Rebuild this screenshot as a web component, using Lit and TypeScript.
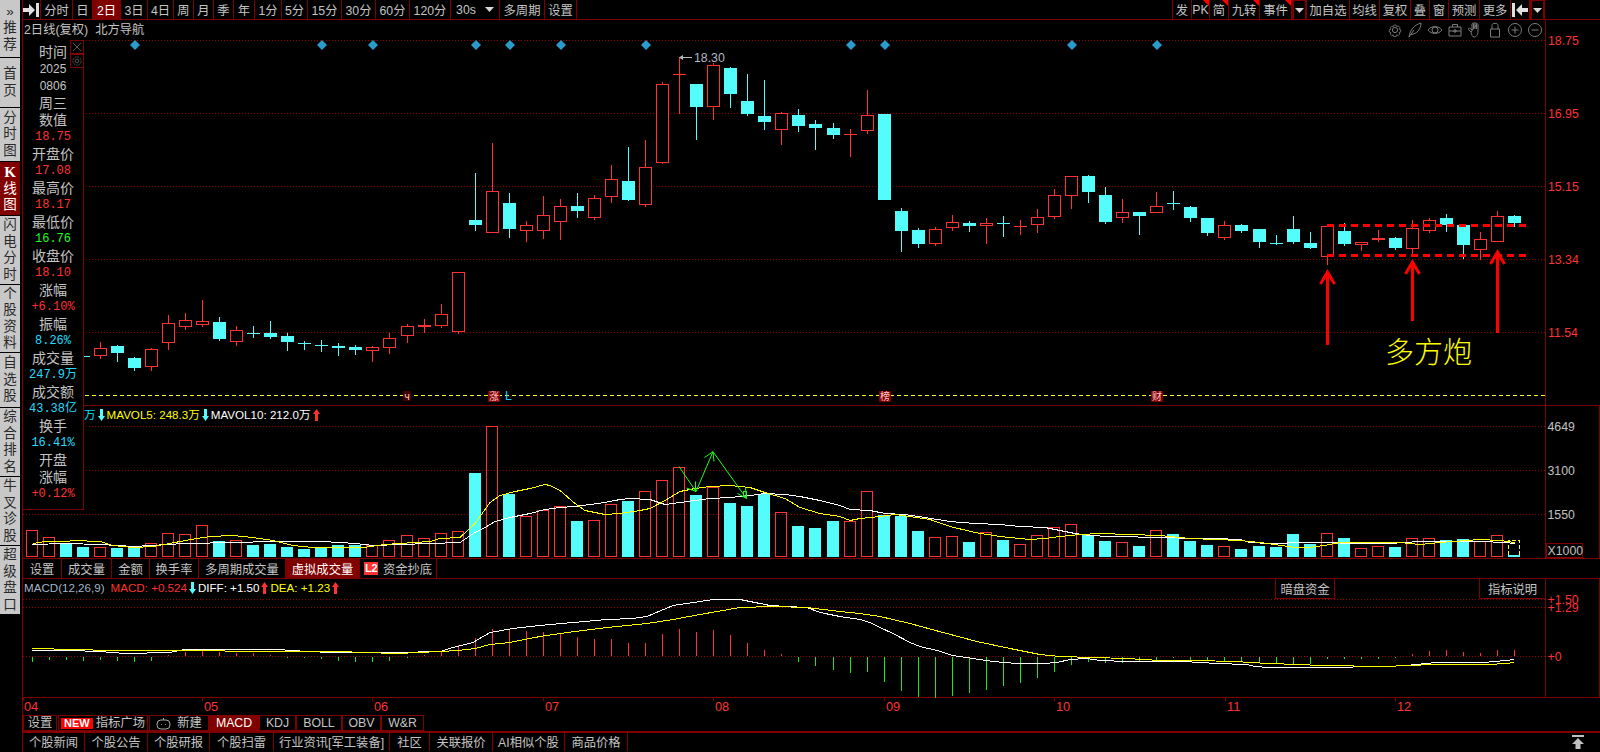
import { LitElement, html, svg, css } from "lit";
import { customElement } from "lit/decorators.js";

const RED = "#ff3232";
const CYAN = "#54fcfc";
const DARK = "#800000";
const cx = (i: number) => Math.floor(100.3 + 17.04 * (i - 1));

type C = [string, number, number, number, number];
const seg1: C[] = [
  ["c", 259, 258, 259, 259], ["r", 216, 235, 257, 266], ["c", 225, 228, 248, 275], ["c", 262, 264, 293, 302], ["r", 235, 238, 292, 302],
  ["r", 136, 160, 218, 240], ["r", 129, 151, 170, 180], ["r", 90, 154, 164, 170], ["c", 141, 156, 206, 213], ["r", 168, 181, 215, 228],
  ["c", 168, 189, 191, 204], ["c", 153, 190, 200, 207], ["c", 190, 198, 215, 243], ["c", 213, 219, 221, 240], ["c", 210, 225, 228, 246],
  ["c", 220, 228, 234, 258], ["c", 225, 231, 240, 255], ["r", 229, 232, 242, 276], ["r", 190, 205, 233, 252], ["r", 163, 169, 197, 219],
  ["r", 148, 165, 171, 188], ["r", 102, 133, 167, 174], ["r", 7, 7, 185, 191],
];
const seg2: C[] = [
  ["c", 399, 540, 555, 573], ["r", 310, 454, 578, 578], ["c", 460, 489, 567, 594], ["r", 544, 556, 572, 605], ["r", 468, 526, 572, 597],
  ["r", 477, 499, 545, 600], ["c", 459, 498, 513, 534], ["r", 465, 475, 533, 540], ["r", 375, 418, 470, 489], ["c", 321, 423, 480, 483],
  ["r", 300, 382, 494, 501], ["r", 126, 133, 368, 372], ["r", 52, 102, 105, 222], ["c", 132, 132, 201, 300], ["r", 70, 76, 200, 240],
  ["c", 81, 84, 162, 204], ["c", 102, 183, 222, 228], ["c", 120, 228, 246, 270], ["r", 217, 220, 269, 315], ["c", 207, 225, 258, 276],
  ["c", 240, 252, 264, 330], ["c", 249, 264, 285, 297], ["r", 267, 282, 285, 351], ["r", 150, 226, 272, 282], ["c", 222, 222, 480, 480],
];
const seg3: C[] = [
  ["c", 205, 213, 273, 335], ["c", 265, 270, 312, 323], ["r", 262, 268, 311, 317], ["r", 225, 247, 263, 273], ["c", 243, 250, 257, 276],
  ["r", 234, 250, 257, 312], ["c", 228, 249, 251, 291], ["r", 240, 258, 260, 285], ["r", 207, 232, 254, 278], ["r", 148, 166, 230, 238],
  ["r", 107, 109, 167, 206], ["c", 105, 108, 156, 188], ["c", 141, 165, 246, 252], ["r", 177, 217, 233, 248], ["c", 216, 216, 228, 285],
  ["r", 156, 199, 218, 218], ["c", 153, 189, 191, 210], ["c", 198, 201, 234, 246], ["c", 234, 234, 279, 288], ["r", 243, 256, 293, 300],
  ["c", 252, 255, 273, 279], ["c", 267, 267, 306, 324], ["c", 285, 310, 312, 315], ["c", 228, 267, 306, 312], ["c", 276, 309, 324, 327],
  ["r", 258, 259, 350, 375], ["c", 250, 273, 312, 318], ["r", 306, 307, 315, 333], ["r", 270, 294, 300, 306], ["c", 291, 294, 324, 330],
  ["r", 240, 265, 326, 345], ["r", 235, 241, 272, 279], ["c", 222, 234, 255, 276], ["c", 255, 255, 315, 357], ["r", 276, 298, 329, 360],
  ["r", 213, 229, 305, 305], ["c", 225, 228, 249, 261],
];
const conv = (s: C[], off: number) => s.map(([c, a, b, d, e]) => [c, off + a / 3, off + b / 3, off + d / 3, off + e / 3] as C);
const candles: C[] = [...conv(seg1, 270), ...conv(seg2, 40), ...conv(seg3, 140)];

// volume: index from -3
const vols: [string, number][] = [
  ["r", 530], ["r", 537], ["c", 544], ["c", 547], ["r", 547], ["c", 548], ["c", 547], ["r", 543], ["r", 533], ["r", 534], ["r", 525],
  ["c", 541], ["r", 540], ["c", 545], ["c", 544], ["c", 547], ["c", 549], ["c", 547], ["c", 545], ["c", 545], ["r", 545], ["r", 540],
  ["r", 535], ["r", 538], ["r", 533], ["r", 531], ["c", 473], ["r", 426], ["c", 494], ["r", 516], ["r", 510], ["r", 506], ["c", 521],
  ["r", 520], ["r", 504], ["c", 501], ["r", 491], ["r", 480], ["r", 467], ["c", 495], ["r", 487], ["c", 503], ["c", 506], ["c", 494],
  ["r", 512], ["c", 526], ["c", 528], ["c", 521], ["r", 521], ["r", 491], ["c", 515], ["c", 516], ["c", 531], ["r", 537], ["r", 536],
  ["c", 542], ["r", 532], ["c", 540], ["r", 544], ["r", 535], ["r", 527], ["r", 524], ["c", 535], ["c", 541], ["r", 542], ["c", 546],
  ["r", 530], ["c", 534], ["c", 541], ["c", 545], ["r", 546], ["c", 549], ["c", 546], ["c", 547], ["c", 534], ["c", 544], ["r", 533],
  ["c", 538], ["r", 548], ["r", 546], ["c", 547], ["r", 538], ["r", 538], ["c", 540], ["c", 539], ["r", 541], ["r", 535],
];

const volWhite = "32,544 66,543.5 100,544 117,545 134,546 151,545.5 168,544 185,543 236,542 270,541 321,541.5 340,542 355,543 374,545 400,544 430,543 460,542 475,532 485,527 495,521 510,517 530,513 545,509 560,507 575,506 590,504 605,502 620,499 630,498 650,499 665,504 680,502 695,500 710,498 730,497 750,495 765,493 785,494 800,496 820,500 840,505 850,509 870,510 885,513 905,514 925,517 950,521 975,523 1000,524 1020,526 1045,527 1060,530 1075,533 1090,535 1110,536 1165,537 1190,538 1215,538 1240,539 1250,542 1270,543 1285,543 1290,542 1330,542 1350,543 1390,543 1420,541 1480,541 1505,542 1515,543";
const volYellow = "33,543 45,541 67,541 73,540 100,541 113,545 133,547 153,546 170,543 180,541 197,538 210,536 233,535 253,537 273,540 293,545 313,547 340,547 363,547 385,544 430,541 440,538 460,537 475,523 490,502 500,495 515,491 530,488 545,484 550,485 560,490 575,503 585,510 605,514 620,513 640,510 650,508 665,500 680,491 695,488 710,486 730,485 750,487 765,492 785,498 800,507 820,513 840,516 850,520 860,518 880,516 895,514 930,519 950,526 975,532 1000,536 1020,538 1030,539 1045,538 1060,536 1080,534 1100,533 1130,534 1160,535 1190,538 1215,539 1240,540 1260,542 1275,544 1295,547 1310,547 1330,544 1340,542 1400,542 1420,544 1440,542 1480,539 1500,540 1515,542";
const macdWhite = "32,650 70,650 100,651 125,653 170,652 185,649 280,649 290,650 330,652 397,652 440,651 453,647 473,642 490,632 513,628 540,625 573,622 607,619 633,618 647,616 673,605 687,603 713,599 740,599 750,601 770,605 787,606 807,607 820,612 840,616 860,619 870,622 880,627 893,633 910,642 920,646 937,650 953,655 973,658 993,661 1017,663 1043,663 1057,662 1070,659 1087,658 1100,660 1127,661 1165,661 1183,661 1200,662 1217,663 1247,664 1255,666 1268,667 1285,667 1320,667 1387,666 1405,665 1417,664 1425,663 1438,662 1485,662 1493,661 1507,660 1514,659";
const macdYellow = "32,648 75,649 110,650 180,650 270,651 340,651 363,652 398,653 440,651 458,650 475,648 490,644 510,642 540,636 567,632 607,627 647,623 673,619 700,614 740,607 773,606 807,607 840,611 860,613 880,616 910,623 943,632 977,641 1010,648 1040,654 1060,656 1093,657 1127,658 1160,660 1197,660 1233,661 1252,662 1268,663 1300,664 1320,665 1387,666 1405,665 1438,664 1488,664 1507,663 1514,662";

// MACD histogram: offset from the zero line, starting at index -3; negative means green
const hist = [-5, -3, -3, -4, -3, -4, -5, -4, 1, 4, 5, 4, 3, 3, 1, -1, -1, -2, -4, -5, -5, -4, -1, 1, 4, 11, 18, 27, 27, 25, 24, 22, 19, 17, 17, 13, 13, 22, 27, 24, 26, 21, 13, 6, 2, -5, -9, -13, -16, -15, -25, -34, -40, -41, -39, -36, -33, -29, -26, -21, -15, -8, -5, -6, -6, -5, -3, -1, -3, -4, -5, -5, -6, -7, -7, -7, -2, -2, -2, -2, -1, 2, 5, 6, 4, 3, 6, 6];

const diamonds = [135, 322, 373, 476, 510, 561, 646, 851, 885, 1072, 1157];

const parseP = (s: string) => s.split(" ").map((p) => p.split(",").map(Number));
const snap = (s: string) => parseP(s).map(([x, y]) => `${Math.round(x)},${Math.floor(y) + 0.5}`).join(" ");

const arrowUp = (x: number, y1: number, y2: number) => svg`
  <path class="ann" d="M${x} ${y1}L${x} ${y2}M${x - 7} ${y2 + 12}L${x} ${y2}L${x + 7} ${y2 + 12}"></path>`;

const legendArrow = (up: boolean, color: string) => html`<svg class="larrow" viewBox="0 0 7 12" width="7" height="12" aria-hidden="true">
  <path fill=${color} d=${up ? "M3.5 0L7 5H5V12H2V5H0Z" : "M3.5 12L7 7H5V0H2V7H0Z"}></path></svg>`;

const tri = html`<svg class="tri" viewBox="0 0 9 5" width="9" height="5" aria-hidden="true"><path fill="#d8d8d8" d="M0 0H9L4.5 5Z"></path></svg>`;

const leftTools: [string, number, boolean?][] = [
  ["分时", 32], ["日", 20], ["2日", 28, true], ["3日", 27], ["4日", 26], ["周", 20], ["月", 20], ["季", 20], ["年", 21], ["1分", 27],
  ["5分", 26], ["15分", 34], ["30分", 34], ["60分", 34], ["120分", 41],
];
const rightTools: [string, number, boolean?][] = [
  ["发", 20], ["PK", 18, true], ["简", 19, true], ["九转", 31, true], ["事件", 32, true],
];
const rightTools2: [string, number][] = [["加自选", 43], ["均线", 30], ["复权", 31], ["叠", 19], ["窗", 19], ["预测", 31], ["更多", 31]];

const panelRows: [string, string][] = [
  ["时间", "l"], ["2025", "d"], ["0806", "d"], ["周三", "l"], ["数值", "l"], ["18.75", "r"], ["开盘价", "l"], ["17.08", "r"],
  ["最高价", "l"], ["18.17", "r"], ["最低价", "l"], ["16.76", "g"], ["收盘价", "l"], ["18.10", "r"], ["涨幅", "l"], ["+6.10%", "r"],
  ["振幅", "l"], ["8.26%", "c"], ["成交量", "l"], ["247.9万", "c"], ["成交额", "l"], ["43.38亿", "c"], ["换手", "l"], ["16.41%", "c"],
  ["开盘", "l"], ["涨幅", "l"], ["+0.12%", "r"],
];

const sideTabs: [string[], number, boolean?][] = [
  [["»", "推", "荐"], 57], [["首", "页"], 49], [["分", "时", "图"], 53], [["K", "线", "图"], 53, true],
  [["闪", "电", "分", "时"], 68], [["个", "股", "资", "料"], 67], [["自", "选", "股"], 54], [["综", "合", "排", "名"], 68],
  [["牛", "叉", "诊", "股"], 68], [["超", "级", "盘", "口"], 68],
];

const volTabs: [string, number, boolean?][] = [["设置", 39], ["成交量", 50], ["金额", 38], ["换手率", 49], ["多周期成交量", 87], ["虚拟成交量", 74, true]];
const bottomTabs: [string, number][] = [["个股新闻", 63], ["个股公告", 63], ["个股研报", 62], ["个股扫雷", 64], ["行业资讯[军工装备]", 116], ["社区", 40], ["关联报价", 63], ["AI相似个股", 72], ["商品价格", 63]];

const months: [string, number][] = [["04", 23], ["05", 202], ["06", 372], ["07", 543], ["08", 713], ["09", 884], ["10", 1054], ["11", 1225], ["12", 1395]];

@customElement("app-root")
export class AppRoot extends LitElement {
  static styles = css`
    :host { display: block; width: 1600px; height: 752px; background: #000; overflow: hidden; color: #c4c4c4;
      font: 12.3px "Liberation Sans", "Noto Sans CJK SC", sans-serif; }
    .root { display: flex; height: 752px; }
    .side { width: 20px; margin-right: 2px; display: flex; flex-direction: column; gap: 1px; flex: none; }
    .stab { background: #c8c8c8; color: #2a2a2a; display: flex; flex-direction: column; justify-content: center; align-items: center;
      font-size: 13.5px; line-height: 16.5px; }
    .stab.on { background: #800000; color: #fff; }
    .stab b { font: bold 15px "Liberation Serif", serif; }
    .main { flex: 1; min-width: 0; border-left: 1px solid #800000; display: flex; flex-direction: column; }
    .toolbar { height: 19px; border-bottom: 1px solid #800000; display: flex; flex: none; margin-left: -1px; }
    .t { display: flex; align-items: center; justify-content: center; border-right: 1px solid #800000; box-sizing: border-box; position: relative; white-space: nowrap; }
    .t.on { background: #800000; color: #fff; }
    .t.first { border-left: 1px solid #800000; }
    .t.corner::after { content: ""; position: absolute; right: 0; top: 0; width: 0; height: 0; border-top: 6px solid #ff0000; border-left: 6px solid transparent; }
    .t.drop { border: 1px solid #800000; border-width: 1px 2px; border-bottom: 0; }
    .t.th { gap: 9px; }
    .spacer { flex: 1; }
    .title { height: 20px; flex: none; display: flex; align-items: center; gap: 7px; padding-left: 1px; line-height: 20px; position: relative; }
    .tools { position: absolute; left: 1362px; top: 0; height: 20px; width: 160px; display: flex; }
    .tools svg { flex: none; width: 20px; height: 20px; fill: none; stroke: #7c7c7c; stroke-width: 1; }
    .body { position: relative; flex: none; display: flex; flex-direction: column; }
    .pane { position: relative; display: block; flex: none; }
    .pane svg.chart { display: block; overflow: visible; }
    .p1 { height: 365px; border-bottom: 1px solid #800000; }
    .p2 { height: 152px; border-bottom: 1px solid #800000; }
    .vt { height: 19px; border-bottom: 1px solid #800000; display: flex; flex: none; }
    .p3 { height: 118px; border-bottom: 1px solid #800000; }
    .badge { background: #ff3232; color: #fff; font: bold 11px/13px "Liberation Sans", sans-serif; padding: 0 1px; width: 12px; height: 13px; text-align: center; margin-right: 5px; }
    .legend { position: absolute; display: flex; align-items: center; white-space: nowrap; font-size: 11.6px; line-height: 16px; gap: 2px; }
    .l1 { left: 61px; top: 1px; }
    .l2 { left: 1px; top: 1px; }
    .larrow { flex: none; }
    .y { color: #ffff00; } .w { color: #fff; } .cy { color: #00e0ff; } .rd { color: #ff3232; margin-left: 4px; } .gy { color: #a0b4c8; }
    .panel { position: absolute; left: 0; top: 0; width: 61px; height: 470px; box-sizing: border-box; background: #000;
      border-right: 1px solid #800000; border-bottom: 1px solid #800000; padding-top: 4px; display: grid; grid-auto-rows: 17px; text-align: center; }
    .panel span { line-height: 17px; white-space: nowrap; }
    .pl { font-size: 14px; }
    .pv { font: 12px/17px "Liberation Mono", "Noto Sans CJK SC", monospace; }
    .pd { color: #c4c4c4; font: 12px/17px "Liberation Sans", sans-serif; }
    .pr { color: #ff3232; } .pg { color: #1aff1a; } .pc { color: #22ddff; }
    .mini { position: absolute; left: 47px; top: 0; display: flex; flex-direction: column; }
    .mini svg { display: block; width: 12px; height: 12px; border: 1px solid #800000; box-sizing: content-box; fill: none; stroke: #5c5c5c; }
    .box { position: absolute; top: 0; height: 20px; box-sizing: border-box; border: 1px solid #800000; border-top: 0; display: flex; align-items: center; justify-content: center; }
    .b1 { left: 1252px; width: 60px; }
    .b2 { left: 1456px; width: 67px; }
    .axis { flex: none; height: 17px; display: block; }
    .tabs1 { height: 16px; flex: none; display: flex; gap: 1px; }
    .k { display: flex; align-items: center; justify-content: center; box-sizing: border-box; border: 1px solid #800000; white-space: nowrap; line-height: 14px; gap: 3px; }
    .k.on { background: #800000; color: #fff; border-color: #800000; }
    .k.j { margin-left: -1px; }
    .new { background: #ff0000; color: #fff; font: bold 11px/11px "Liberation Sans", sans-serif; padding: 0 3px; height: 11px; }
    .k.add { gap: 6px; }
    .bot { height: 18px; flex: none; border-top: 2px solid #800000; display: flex; align-items: center; position: relative; margin-left: -1px; }
    .bot .t { height: 18px; }
    .up { position: absolute; left: 1549px; top: 2px; }
    text { font-family: "Liberation Sans", sans-serif; font-size: 12.3px; }
    .ax-r { fill: #ff3232; }
    .ax-g { fill: #c0c0c0; }
    .mk { font-size: 10px; font-family: "Noto Sans CJK SC", sans-serif; fill: #ffc8c8; text-anchor: middle; }
    .big { font-family: "Noto Sans CJK SC", sans-serif; font-size: 29px; font-weight: 300; fill: #ffff00; }
    .ann { stroke: #ff0000; stroke-width: 3; fill: none; }
    .mon { fill: #ff3232; font-size: 12.8px; }
  `;

  candle(c: C, i: number) {
    const [k, hi, top, bot, lo] = c;
    const x = cx(i);
    const col = k === "r" ? RED : CYAN;
    const t = Math.round(top), b = Math.round(bot), h = Math.round(hi), l = Math.round(lo);
    const wick = svg`<path d="M${x + 0.5} ${h}V${t}M${x + 0.5} ${b}V${l}" stroke=${col} fill="none"></path>`;
    if (b - t <= 1) return svg`${wick}<rect x=${x - 6} y=${t} width="13" height="1" fill=${col}></rect>`;
    if (k === "r") return svg`${wick}<rect x=${x - 5.5} y=${t + 0.5} width="12" height=${b - t - 1} stroke=${col} fill="#000"></rect>`;
    return svg`${wick}<rect x=${x - 6} y=${t} width="13" height=${b - t} fill=${col}></rect>`;
  }

  grid(ys: number[]) {
    return ys.map((y) => svg`<line x1="23" x2="1545" y1=${y + 0.5} y2=${y + 0.5} stroke="#900000" stroke-dasharray="1 2"></line>`);
  }

  mainPane() {
    return svg`<svg class="chart" width="1577" height="365" viewBox="23 40 1577 365" shape-rendering="crispEdges">
      ${this.grid([40, 113, 186, 259, 332])}
      <line x1="1545.5" x2="1545.5" y1="20" y2="405" stroke=${DARK}></line>
      <line x1="85" x2="1545" y1="395.5" y2="395.5" stroke="#ffff33" stroke-dasharray="4 3"></line>
      ${diamonds.map((x) => svg`<path d="M${x} 40L${x + 5} 45L${x} 50L${x - 5} 45Z" fill="#2a9ccc" shape-rendering="auto"></path>`)}
      ${candles.map((c, i) => this.candle(c, i))}
      <path d="M682 57.5H692" stroke="#b8b8b8"></path>
      <path d="M679 57.5L683 55V60Z" fill="#b8b8b8" shape-rendering="auto"></path>
      <text x="694" y="62" fill="#b4b8c8" font-size="12.5">18.30</text>
      <path class="ann" stroke-dasharray="7 5" d="M1327 225.5H1527M1327 255.5H1527"></path>
      <g shape-rendering="auto">
        ${arrowUp(1327.5, 345, 272)}${arrowUp(1412.5, 321, 262)}${arrowUp(1497.5, 333, 252)}
      </g>
      <text class="big" x="1385" y="363">多方炮</text>
      <rect x="403" y="391" width="8" height="10" fill="#400"></rect>
      <text class="mk" x="407" y="400" fill=${RED}>ч</text>
      <rect x="488" y="391" width="12" height="11" fill=${DARK}></rect><text class="mk" x="494" y="400">涨</text>
      <text x="505" y="400" fill="#22ccff" font-size="10">L</text>
      <rect x="879" y="391" width="12" height="11" fill=${DARK}></rect><text class="mk" x="885" y="400">榜</text>
      <rect x="1151" y="391" width="12" height="11" fill=${DARK}></rect><text class="mk" x="1157" y="400">财</text>
      ${[["18.75", 45], ["16.95", 118], ["15.15", 191], ["13.34", 264], ["11.54", 337]].map(([t, y]) => svg`<text class="ax-r" x="1548" y=${y} shape-rendering="auto">${t}</text>`)}
    </svg>`;
  }

  volPane() {
    const base = 557;
    return svg`<svg class="chart" width="1577" height="152" viewBox="23 406 1577 152" shape-rendering="crispEdges">
      ${this.grid([426, 470, 514])}
      <line x1="1545.5" x2="1545.5" y1="406" y2="558" stroke=${DARK}></line>
      <line x1="1599.5" x2="1599.5" y1="406" y2="558" stroke=${DARK}></line>
      ${vols.map(([k, t], n) => {
        const x = cx(n - 3);
        return k === "r"
          ? svg`<rect x=${x - 5.5} y=${t + 0.5} width="11" height=${base - t - 1} fill="none" stroke=${RED}></rect>`
          : svg`<rect x=${x - 6} y=${t} width="12" height=${base - t} fill=${CYAN}></rect>`;
      })}
      <path d="M${cx(84) - 5.5} 555V540.5H${cx(84) + 5.5}V555" fill="none" stroke="#ffff33" stroke-dasharray="4 2"></path>
      <rect x=${cx(84) - 6} y="555" width="12" height="2" fill=${CYAN}></rect>
      <polyline points=${snap(volWhite)} fill="none" stroke="#fff"></polyline>
      <polyline points=${snap(volYellow)} fill="none" stroke="#ffff00"></polyline>
      <g shape-rendering="auto" fill="none" stroke="#1aff1a">
        <path d="M679 466.5L696 491.5L713 451.7L746.5 498.5"></path>
        <path d="M695.5 481.5V491.5M686.5 488L696 491.5M704.5 457.5L713 451.7L714 461.5M737.5 493.5L746.5 498.5L745.5 487.5"></path>
        <rect x="743.5" y="491.5" width="3" height="5"></rect>
      </g>
      ${[["4649", 431], ["3100", 475], ["1550", 519]].map(([t, y]) => svg`<text class="ax-g" x="1547.5" y=${y} shape-rendering="auto">${t}</text>`)}
      <rect x="1546.5" y="543.5" width="36" height="14" fill="none" stroke=${DARK}></rect>
      <text class="ax-g" x="1547.5" y="555" shape-rendering="auto">X1000</text>
    </svg>`;
  }

  macdPane() {
    const zero = 656;
    return svg`<svg class="chart" width="1577" height="118" viewBox="23 579 1577 118" shape-rendering="crispEdges">
      ${this.grid([599, 607, 656])}
      <line x1="1545.5" x2="1545.5" y1="579" y2="697" stroke=${DARK}></line>
      <line x1="1599.5" x2="1599.5" y1="579" y2="697" stroke=${DARK}></line>
      ${hist.map((v, n) => {
        const x = cx(n - 3) + 0.5;
        return v > 0
          ? svg`<line x1=${x} x2=${x} y1=${zero - v} y2=${zero} stroke=${RED}></line>`
          : svg`<line x1=${x} x2=${x} y1=${zero + 1} y2=${zero + 1 - v} stroke="#1ae61a"></line>`;
      })}
      <polyline points=${snap(macdWhite)} fill="none" stroke="#fff"></polyline>
      <polyline points=${snap(macdYellow)} fill="none" stroke="#ffff00"></polyline>
      ${[["+1.50", 604], ["+1.29", 612], ["+0", 661]].map(([t, y]) => svg`<text class="ax-r" x="1547.5" y=${y} shape-rendering="auto">${t}</text>`)}
    </svg>`;
  }

  render() {
    return html`<div class="root">
      <nav class="side">
        ${sideTabs.map(([chars, h, on]) => html`<div class="stab ${on ? "on" : ""}" style="height:${h}px">
          ${chars.map((c) => (c === "K" ? html`<b>${c}</b>` : html`<span>${c}</span>`))}
        </div>`)}
      </nav>
      <div class="main">
        <div class="toolbar">
          <div class="t first" style="width:19px">
            <svg width="17" height="14" viewBox="0 0 17 14" aria-hidden="true"><path fill="#e0e0e0" d="M0 5H6V1L12 7L6 13V9H0ZM13 0H16V14H13Z"></path></svg>
          </div>
          ${leftTools.map(([t, w, on]) => html`<div class="t ${on ? "on" : ""}" style="width:${w}px">${t}</div>`)}
          <div class="t th" style="width:49px"><span>30s</span>${tri}</div>
          <div class="t" style="width:45px">多周期</div>
          <div class="t" style="width:32px">设置</div>
          <div class="spacer"></div>
          ${rightTools.map(([t, w, c], i) => html`<div class="t ${c ? "corner" : ""} ${i === 0 ? "first" : ""}" style="width:${w}px">${t}</div>`)}
          <div class="t drop" style="width:15px">${tri}</div>
          ${rightTools2.map(([t, w]) => html`<div class="t" style="width:${w}px">${t}</div>`)}
          <div class="t" style="width:19px">
            <svg width="16" height="14" viewBox="0 0 16 14" aria-hidden="true"><path fill="#e0e0e0" d="M0 0H3V14H0ZM16 5H10V1L4 7L10 13V9H16Z"></path></svg>
          </div>
          <div class="t drop" style="width:15px">${tri}</div>
          <div style="width:55px"></div>
        </div>
        <div class="title">
          <span>2日线(复权)</span><span>北方导航</span>
          <div class="tools">
            <svg viewBox="0 0 20 20" aria-hidden="true"><circle cx="10" cy="10" r="2.6"></circle><path d="M8.500 4h3l.6 2 1.800-.9 2 2-1 1.800 2 .6v3l-2 .6 1 1.800-2 2-1.800-1-.6 2h-3l-.6-2-1.800 1-2-2 1-1.800-2-.6v-3l2-.6-1-1.800 2-2 1.800 1z" transform="translate(10 10) scale(.82) translate(-10 -10)"></path></svg>
            <svg viewBox="0 0 20 20" aria-hidden="true"><path d="M4 17C5 10 9 5 16 3C16 9 12 14 6 14.500M4 17L9 10"></path></svg>
            <svg viewBox="0 0 20 20" aria-hidden="true"><path d="M3 10C6 5.500 14 5.500 17 10C14 14.500 6 14.500 3 10Z"></path><circle cx="10" cy="10" r="3"></circle></svg>
            <svg viewBox="0 0 20 20" aria-hidden="true"><path d="M4 7H16V16H4ZM4 11H16M7.500 7V4.500H12.500V7M9 10H11V12H9Z"></path></svg>
            <svg viewBox="0 0 20 20" aria-hidden="true"><path d="M6 12L3.500 9.500C2.800 8.500 4 7.500 5 8.500L7 10V4C7 3 8.500 3 8.500 4V9M8.500 3.500C8.500 2.300 10 2.300 10 3.500V9M10 3.500C10 2.500 11.500 2.500 11.500 3.500V9M11.500 4.500C11.500 3.500 13 3.500 13 4.500V11C13 15 11 17 9 17C7 17 6.500 14 6 12Z"></path></svg>
            <svg viewBox="0 0 20 20" aria-hidden="true"><path d="M5.500 9H14.500V17H5.500ZM7 9V5.500C7 2.500 13 2.500 13 5.500V9"></path></svg>
            <svg viewBox="0 0 20 20" aria-hidden="true"><circle cx="10" cy="10" r="6.500"></circle><path d="M6.500 10H13.500M10 6.500V13.500"></path></svg>
            <svg viewBox="0 0 20 20" aria-hidden="true"><circle cx="10" cy="10" r="6.500"></circle><path d="M6.500 10H13.500"></path></svg>
          </div>
        </div>
        <div class="body">
          <div class="pane p1">${this.mainPane()}</div>
          <div class="pane p2">
            ${this.volPane()}
            <div class="legend l1">
              <span class="cy">万</span>${legendArrow(false, "#54fcfc")}
              <span class="y">MAVOL5: 248.3万</span>${legendArrow(false, "#54fcfc")}
              <span class="w">MAVOL10: 212.0万</span>${legendArrow(true, RED)}
            </div>
          </div>
          <div class="vt">
            ${volTabs.map(([t, w, on]) => html`<div class="t ${on ? "on" : ""}" style="width:${w}px">${t}</div>`)}
            <div class="t" style="width:77px"><span class="badge">L2</span><span>资金抄底</span></div>
          </div>
          <div class="pane p3">
            ${this.macdPane()}
            <div class="legend l2">
              <span class="gy">MACD(12,26,9)</span><span class="rd">MACD: +0.524</span>${legendArrow(false, "#54fcfc")}
              <span class="w">DIFF: +1.50</span>${legendArrow(true, RED)}
              <span class="y">DEA: +1.23</span>${legendArrow(true, RED)}
            </div>
            <div class="box b1">暗盘资金</div>
            <div class="box b2">指标说明</div>
          </div>
          <aside class="panel">
            ${panelRows.map(([t, k]) => html`<span class=${k === "l" ? "pl" : k === "d" ? "pd" : `pv p${k}`}>${t}</span>`)}
            <div class="mini">
              <svg viewBox="0 0 13 13" aria-hidden="true"><path d="M2 2L11 11M11 2L2 11"></path></svg>
              <svg viewBox="0 0 13 13" aria-hidden="true"><circle cx="6.500" cy="6.500" r="2"></circle><circle cx="6.500" cy="6.500" r="4.500" stroke-dasharray="2 1"></circle></svg>
            </div>
          </aside>
        </div>
        <svg class="axis" width="1577" height="17" viewBox="23 698 1577 17">
          ${months.map(([t, x]) => svg`
            <line x1=${x + 0.5} x2=${x + 0.5} y1="698" y2="701" stroke=${DARK} shape-rendering="crispEdges"></line>
            <text class="mon" x=${x + (x === 23 ? 1 : 2)} y="711">${t}</text>`)}
        </svg>
        <div class="tabs1">
          <div class="k" style="width:34px">设置</div>
          <div class="k" style="width:90px"><span class="new">NEW</span><span>指标广场</span></div>
          <div class="k add" style="width:60px">
            <svg width="15" height="13" viewBox="0 0 15 13" fill="none" stroke="#a8a8a8" aria-hidden="true"><rect x="1" y="3" width="13" height="9" rx="4"></rect><path d="M7.500 3V1M5 7.500H5.800M9.200 7.500H10"></path></svg>
            <span>新建</span>
          </div>
          <div class="k on j" style="width:50px">MACD</div>
          <div class="k j" style="width:37px">KDJ</div>
          <div class="k j" style="width:46px">BOLL</div>
          <div class="k j" style="width:39px">OBV</div>
          <div class="k j" style="width:43px">W&amp;R</div>
        </div>
        <div class="bot">
          ${bottomTabs.map(([t, w], i) => html`<div class="t ${i === 0 ? "first" : ""}" style="width:${w}px">${t}</div>`)}
          <svg class="up" width="14" height="14" viewBox="0 0 14 14" aria-hidden="true"><path fill="#c0c0c0" d="M1 0H13V2H1ZM7 3L13 9H9.500V14H4.500V9H1Z"></path></svg>
        </div>
      </div>
    </div>`;
  }
}
